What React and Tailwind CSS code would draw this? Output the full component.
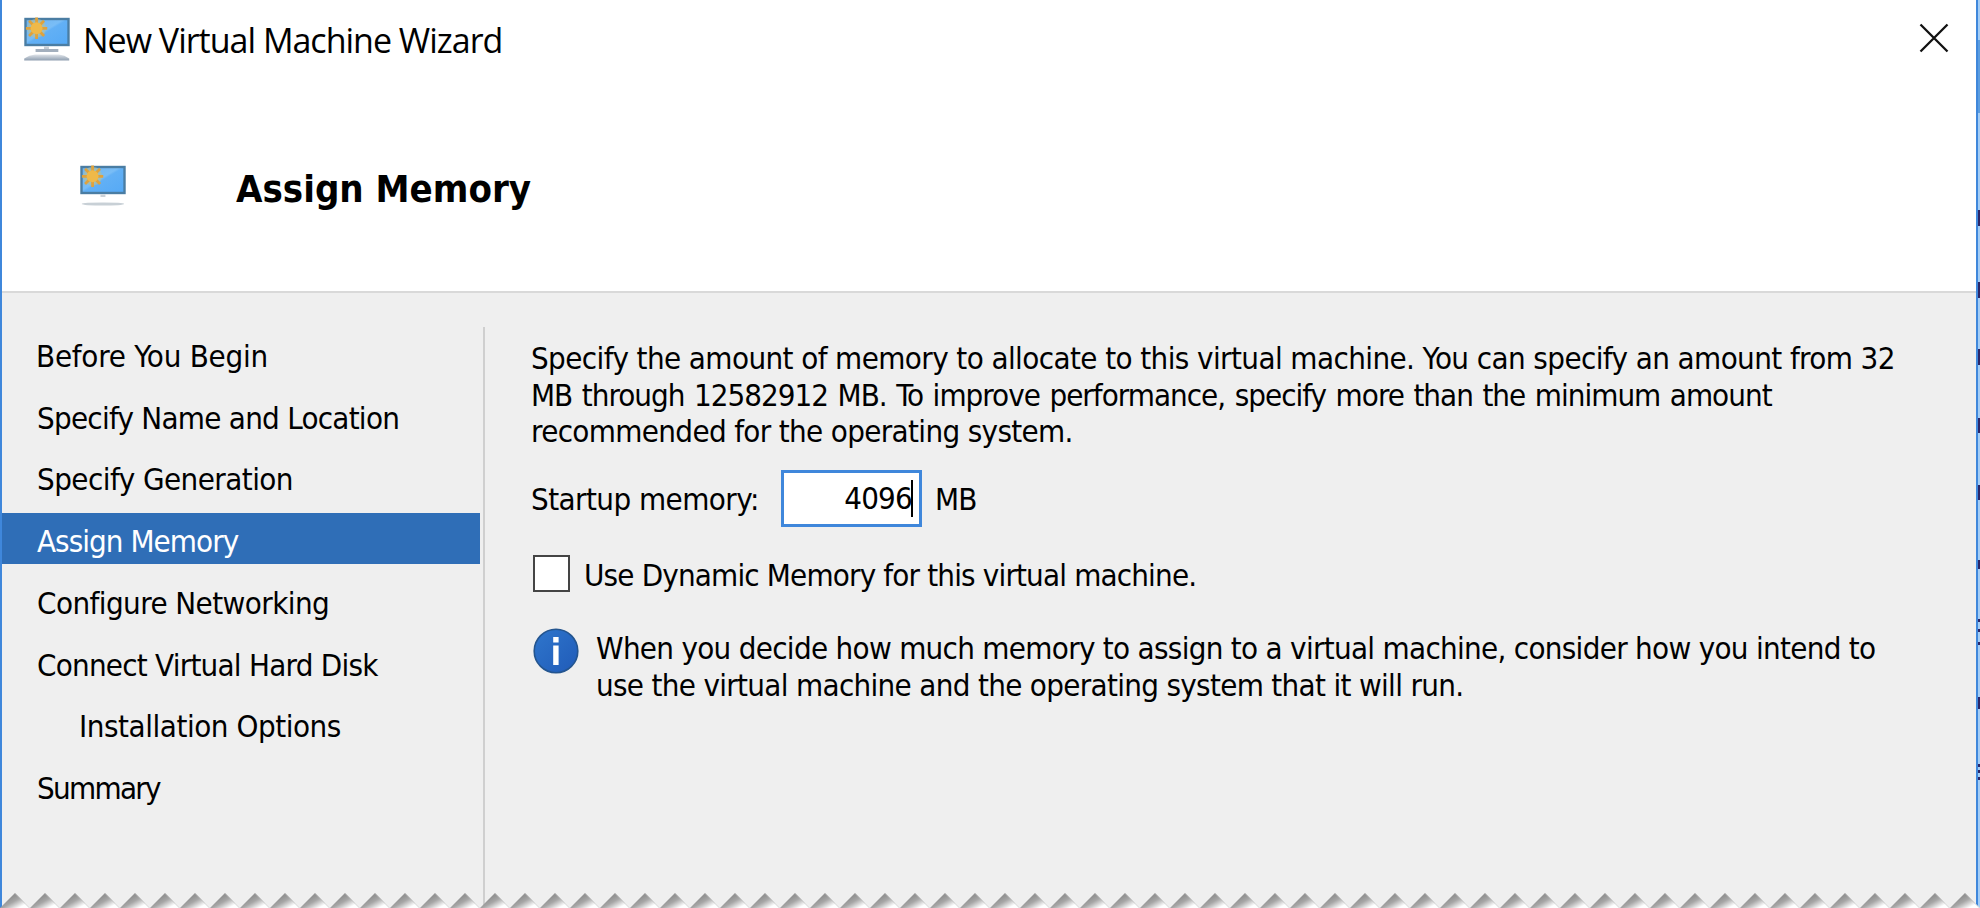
import React from 'react'

const steps = [
  { label: 'Before You Begin', className: 'pl-[34px] tracking-[-0.25px]' },
  { label: 'Specify Name and Location', className: 'pl-[35px] tracking-[-0.74px]' },
  { label: 'Specify Generation', className: 'pl-[35px] tracking-[-0.55px]' },
  { label: 'Assign Memory', className: 'pl-[35px] tracking-[-0.95px]', active: true },
  { label: 'Configure Networking', className: 'pl-[35px] tracking-[-0.57px]' },
  { label: 'Connect Virtual Hard Disk', className: 'pl-[35px] tracking-[-0.76px]' },
  { label: 'Installation Options', className: 'pl-[77px] tracking-[-0.45px]' },
  { label: 'Summary', className: 'pl-[35px] tracking-[-1.7px]' }
]

// Bits of the desktop visible past the right edge of the window
const edgeMarks = [
  [210, 16], [282, 16], [349, 16], [418, 15], [485, 15], [560, 9],
  [619, 3], [629, 3], [642, 3], [697, 12], [764, 3], [770, 3], [777, 3]
]

const ComputerIcon = ({ small = false }) => (
  <svg width="46" height="46" viewBox="0.8 0 46.5 46" preserveAspectRatio="none" className="shrink-0">
    <defs>
      <linearGradient id="screen" x1="0" y1="0" x2="1" y2="1">
        <stop offset="0" stopColor="#6fb4ee" />
        <stop offset="0.45" stopColor="#79bdf6" />
        <stop offset="0.5" stopColor="#62b0f5" />
        <stop offset="1" stopColor="#55a9f6" />
      </linearGradient>
      <linearGradient id="stand" x1="0" y1="0" x2="0" y2="1">
        <stop offset="0" stopColor="#dfe4e9" />
        <stop offset="1" stopColor="#8f9eb0" />
      </linearGradient>
    </defs>
    <rect x="2.3" y="2" width="43.5" height="26" fill="url(#screen)" stroke="#4a7da3" strokeWidth="2.4" />
    {small ? (
      <>
        <rect x="21.5" y="29.5" width="5" height="2.5" fill="#ccd2d8" />
        <ellipse cx="24" cy="39" rx="21.5" ry="1.6" fill="#c8d0d6" />
      </>
    ) : (
      <>
        <rect x="21" y="29.5" width="5" height="3.5" fill="#c5ccd3" />
        <rect x="12.5" y="32" width="23" height="3" fill="#a3afbd" />
        <path d="M1 43.5V41.5Q6 38 12 37.5H36Q42 38 46.5 41.5V43.5Z" fill="url(#stand)" />
      </>
    )}
    <circle cx="13.5" cy="11.3" r="9.5" fill="#b5c09a" opacity="0.6" />
    <path
      d="M13.5 0.5V22M2.7 11.3H24.3M5.9 3.7L21.1 18.9M21.1 3.7L5.9 18.9"
      stroke="#dfa23c"
      strokeWidth="2.8"
    />
    <circle cx="13.5" cy="11.3" r="6" fill="#efb949" />
  </svg>
)

const InfoIcon = () => (
  <svg width="46" height="46" viewBox="0 0 46 46" className="shrink-0">
    <defs>
      <linearGradient id="info" x1="0" y1="0" x2="1" y2="1">
        <stop offset="0" stopColor="#2f76cc" />
        <stop offset="1" stopColor="#205bb8" />
      </linearGradient>
    </defs>
    <circle cx="23" cy="23" r="21.8" fill="url(#info)" stroke="#24558f" strokeWidth="1.6" />
    <rect x="20.2" y="9" width="5.4" height="5.5" fill="#fff" />
    <rect x="20.2" y="17.5" width="5.4" height="19.5" fill="#fff" />
  </svg>
)

const TornEdge = () => (
  <svg width="1980" height="15" className="absolute left-0 bottom-0">
    <defs>
      <linearGradient id="tear" gradientUnits="userSpaceOnUse" x1="11" y1="5" x2="17" y2="16">
        <stop offset="0" stopColor="#939393" />
        <stop offset="0.35" stopColor="#a6a6a6" />
        <stop offset="1" stopColor="#fff" />
      </linearGradient>
      <pattern id="teeth" width="30" height="15" patternUnits="userSpaceOnUse">
        <path d="M0 15L15 0L30 15Z" fill="url(#tear)" />
        <path d="M15 0.5L29.5 15" stroke="#b5b5b5" strokeOpacity="0.6" />
      </pattern>
    </defs>
    <rect width="1980" height="15" fill="url(#teeth)" />
  </svg>
)

export default function App() {
  return (
    <div className="relative flex w-[1980px] h-[908px] overflow-hidden bg-white text-black">
      <div className="flex flex-col w-[1978px] h-full border-l-2 border-r-2 border-[#3f87db]">
        <header className="flex flex-col h-[293px] border-b-2 border-[#d9d9d9] bg-white">
          <div className="flex items-center h-[80px] pl-[22px] pr-[27px]">
            <ComputerIcon />
            <h1 className="ml-[13px] grow whitespace-nowrap font-['Open_Sans',sans-serif] text-[34px] leading-[46px] tracking-[-1px]">
              New Virtual Machine Wizard
            </h1>
            <svg width="30" height="30" viewBox="0 0 30 30" className="mb-[5px]">
              <path d="M1.5 1.5L28.5 28.5M28.5 1.5L1.5 28.5" stroke="#111" strokeWidth="2.3" />
            </svg>
          </div>
          <div className="flex items-start pt-[85px] pl-[78px]">
            <ComputerIcon small />
            <h2 className="ml-[110px] pt-px whitespace-nowrap font-['DejaVu_Sans_Condensed','DejaVu_Sans',sans-serif] text-[38px] leading-[46px] font-bold">
              Assign Memory
            </h2>
          </div>
        </header>

        <div className="flex grow bg-[#efefef] font-['DejaVu_Sans_Condensed','DejaVu_Sans',sans-serif] text-[31px]">
          <nav className="flex flex-col gap-[10.75px] w-[478px] pt-[34.75px]">
            {steps.map(({ label, className, active }) => (
              <div
                key={label}
                className={`h-[51px] pt-[6px] leading-[45px] whitespace-nowrap ${className} ${active ? 'bg-[#2f6eb7] text-white' : ''}`}
              >
                {label}
              </div>
            ))}
          </nav>
          <div className="ml-[3px] mt-[34px] w-[2px] bg-[#cfcfcf]" />

          <main className="flex flex-col pl-[46px] pt-[47px] whitespace-nowrap">
            <p className="leading-[36.7px]">
              <span className="block tracking-[-0.59px]">
                Specify the amount of memory to allocate to this virtual machine. You can specify an amount from 32
              </span>
              <span className="block tracking-[-0.97px] [word-spacing:1.6px]">
                MB through 12582912 MB. To improve performance, specify more than the minimum amount
              </span>
              <span className="block tracking-[-0.65px]">recommended for the operating system.</span>
            </p>

            <div className="flex items-center mt-[20px] h-[57px]">
              <span className="w-[250px] pt-px tracking-[-0.55px]">Startup memory:</span>
              <div className="flex items-center justify-end w-[141px] h-[57px] border-[3px] border-[#3f87db] bg-white">
                <span className="tracking-[-0.8px]">4096</span>
                <span className="w-[2px] h-[37px] -ml-px mr-[6px] bg-black" />
              </div>
              <span className="ml-[13px] pt-px tracking-[-0.8px]">MB</span>
            </div>

            <label className="flex items-center mt-[28px] h-[37px]">
              <span className="w-[37px] h-[37px] ml-[2px] border-2 border-[#444] bg-white" />
              <span className="ml-[14px] pt-[3px] tracking-[-0.83px]">Use Dynamic Memory for this virtual machine.</span>
            </label>

            <div className="flex mt-[36px]">
              <div className="ml-[2px]">
                <InfoIcon />
              </div>
              <p className="ml-[17px] pt-[2px] leading-[36.7px]">
                <span className="block tracking-[-0.7px]">
                  When you decide how much memory to assign to a virtual machine, consider how you intend to
                </span>
                <span className="block tracking-[-0.68px]">
                  use the virtual machine and the operating system that it will run.
                </span>
              </p>
            </div>
          </main>
        </div>
      </div>

      <div className="relative w-[2px] h-full bg-[#a3cdf6]">
        <div className="absolute left-0 top-[40px] w-[2px] h-[73px] bg-[#5b9de0]" />
        {edgeMarks.map(([top, height]) => (
          <div key={top} className="absolute left-0 w-[2px] bg-[#2b2668]" style={{ top, height }} />
        ))}
      </div>

      <TornEdge />
    </div>
  )
}
